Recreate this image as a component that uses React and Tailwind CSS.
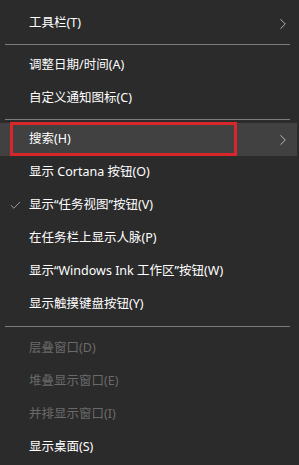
import { ChevronRight, Check } from "lucide-react"

const groups = [
  [{ label: "工具栏(T)", sub: true }],
  [{ label: "调整日期/时间(A)" }, { label: "自定义通知图标(C)" }],
  [
    { label: "搜索(H)", sub: true, active: true },
    { label: "显示 Cortana 按钮(O)" },
    { label: "显示“任务视图”按钮(V)", checked: true },
    { label: "在任务栏上显示人脉(P)" },
    { label: "显示“Windows Ink 工作区”按钮(W)" },
    { label: "显示触摸键盘按钮(Y)" },
  ],
  [
    { label: "层叠窗口(D)", disabled: true },
    { label: "堆叠显示窗口(E)", disabled: true },
    { label: "并排显示窗口(I)", disabled: true },
    { label: "显示桌面(S)" },
  ],
]

function MenuRow({ item }) {
  return (
    <div
      className={`relative flex items-center h-[33px] mr-[2px] ${item.active ? "bg-[#414141]" : ""}`}
    >
      <div className="w-[29px] flex justify-center pl-[1px]">
        {item.checked && <Check size={13} strokeWidth={1.3} className="text-[#cfcfcf]" />}
      </div>
      <span
        className={`flex-1 text-[12.5px] leading-none ${item.disabled ? "text-[#6a6a6a]" : "text-white"}`}
      >
        {item.label}
      </span>
      {item.sub && (
        <ChevronRight size={18} strokeWidth={1.1} className="text-[#d0d0d0] mr-[5px]" />
      )}
      {item.active && (
        <div className="absolute left-[10px] top-[-1px] w-[227px] h-[34px] border-[3px] border-[#d8262b]" />
      )}
    </div>
  )
}

export default function App() {
  return (
    <div className="w-[299px] h-[465px] bg-[#2b2b2b] pt-[7px] font-['Noto_Sans','Noto_Sans_CJK_SC',sans-serif] overflow-hidden">
      {groups.map((group, gi) => (
        <div key={gi}>
          {gi === 1 && <div className="h-px bg-[#7b7b7b] ml-[5px] mr-[9px] my-[4px]" />}
          {gi === 2 && <div className="h-px bg-[#7b7b7b] ml-[5px] mr-[9px] mt-[4px] mb-[3px]" />}
          {gi === 3 && <div className="h-px bg-[#7b7b7b] ml-[5px] mr-[9px] mt-[5px] mb-[5px]" />}
          {group.map((item) => (
            <MenuRow key={item.label} item={item} />
          ))}
        </div>
      ))}
    </div>
  )
}
